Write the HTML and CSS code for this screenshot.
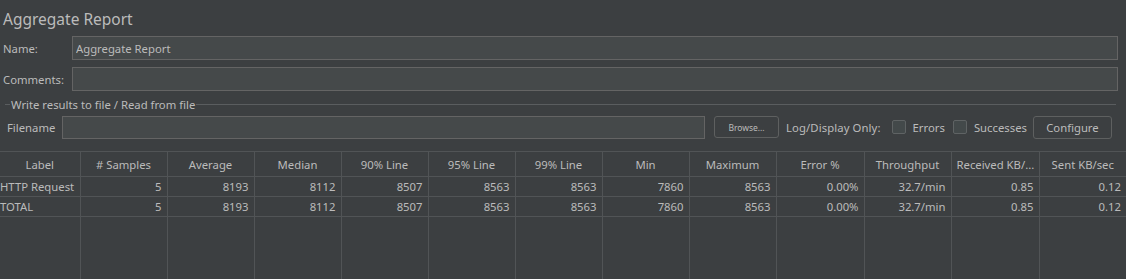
FILE: index.html
```html
<!DOCTYPE html>
<html lang="en">
<head>
    <meta charset="UTF-8">
    <meta name="viewport" content="width=device-width, initial-scale=1.0">
    <title>Aggregate Report</title>
    <link rel="stylesheet" href="styles.css">
</head>
<body>
    <div class="panel">
        <h3 class="panel-title">Aggregate Report</h3>

        <div class="field-row">
            <label class="field-label">Name:</label>
            <input class="text-input" type="text" value="Aggregate Report">
        </div>
        <div class="field-row">
            <label class="field-label">Comments:</label>
            <input class="text-input" type="text">
        </div>

        <fieldset class="file-box">
            <legend>Write results to file / Read from file</legend>
            <div class="file-row">
                <label class="file-label">Filename</label>
                <input class="text-input file-input" type="text">
                <button class="btn btn-small">Browse...</button>
                <span class="log-label">Log/Display Only:</span>
                <label class="check"><span class="check-box"></span>Errors</label>
                <label class="check check-next"><span class="check-box"></span>Successes</label>
                <button class="btn btn-configure">Configure</button>
            </div>
        </fieldset>
    </div>

    <table class="report">
        <colgroup>
            <col style="width: 80px">
            <col style="width: 87px">
            <col style="width: 87px">
            <col style="width: 87px">
            <col style="width: 87px">
            <col style="width: 87px">
            <col style="width: 87px">
            <col style="width: 87px">
            <col style="width: 87px">
            <col style="width: 88px">
            <col style="width: 87px">
            <col style="width: 88px">
            <col>
        </colgroup>
        <thead>
            <tr>
                <th>Label</th>
                <th># Samples</th>
                <th>Average</th>
                <th>Median</th>
                <th>90% Line</th>
                <th>95% Line</th>
                <th>99% Line</th>
                <th>Min</th>
                <th>Maximum</th>
                <th>Error %</th>
                <th>Throughput</th>
                <th>Received KB/...</th>
                <th>Sent KB/sec</th>
            </tr>
        </thead>
        <tbody>
            <tr>
                <td class="name">HTTP Request</td>
                <td>5</td><td>8193</td><td>8112</td><td>8507</td><td>8563</td><td>8563</td>
                <td>7860</td><td>8563</td><td>0.00%</td><td>32.7/min</td><td>0.85</td><td>0.12</td>
            </tr>
            <tr>
                <td class="name">TOTAL</td>
                <td>5</td><td>8193</td><td>8112</td><td>8507</td><td>8563</td><td>8563</td>
                <td>7860</td><td>8563</td><td>0.00%</td><td>32.7/min</td><td>0.85</td><td>0.12</td>
            </tr>
            <tr class="filler">
                <td></td><td></td><td></td><td></td><td></td><td></td><td></td>
                <td></td><td></td><td></td><td></td><td></td><td></td>
            </tr>
        </tbody>
    </table>
</body>
</html>
```

FILE: styles.css
```css
body {
    margin: 0;
    padding: 0;
    background-color: #3c3f41;
    color: #bbbbbb;
    font-family: "Noto Sans", "Open Sans", sans-serif;
    font-size: 11.3px;
    overflow: hidden;
}

.panel {
    padding: 0 8px 0 3px;
}

.panel-title {
    margin: 0;
    height: 36px;
    line-height: 38px;
    font-size: 15.5px;
    font-weight: normal;
}

.field-row {
    display: flex;
    align-items: center;
    height: 24px;
    margin-bottom: 7px;
}

.field-label {
    width: 69px;
    flex-shrink: 0;
}

.text-input {
    flex: 1;
    box-sizing: border-box;
    height: 24px;
    margin: 0;
    padding: 0 3px;
    background-color: #45494a;
    border: 1px solid #646464;
    color: #bbbbbb;
    font-family: inherit;
    font-size: 11.3px;
    outline: none;
}

.file-box {
    margin: -1px 2px 0 2px;
    padding: 0 0 0 2px;
    border: none;
    border-top: 1px solid #5a5d5f;
}

.file-box legend {
    padding: 0 1px;
    margin-left: 3px;
}

.file-row {
    display: flex;
    align-items: center;
    height: 24px;
    margin-top: 3px;
    white-space: nowrap;
}

.file-label {
    width: 55px;
    flex-shrink: 0;
}

.file-input {
    flex: 0 0 643px;
    height: 23px;
}

.btn {
    box-sizing: border-box;
    height: 23px;
    padding: 0 12px;
    margin-left: 8px;
    background-color: #3c3f41;
    border: 1px solid #5e6060;
    border-radius: 3px;
    color: #bbbbbb;
    font-family: inherit;
    font-size: 11.3px;
}

.btn-small {
    width: 65px;
    height: 22px;
    padding: 0;
    margin-left: 9px;
    font-size: 8.5px;
}

.btn-configure {
    width: 79px;
    padding: 0;
    margin-left: 6px;
}

.log-label {
    margin-left: 7px;
    letter-spacing: 0.1px;
}

.check {
    display: flex;
    align-items: center;
    margin-left: 11px;
}

.check-next {
    margin-left: 8px;
}

.check-box {
    box-sizing: border-box;
    width: 14px;
    height: 14px;
    margin-right: 7px;
    background-color: #43494a;
    border: 1px solid #5f6364;
    border-radius: 2px;
}

.report {
    width: 100%;
    margin-top: 12px;
    table-layout: fixed;
    border-collapse: collapse;
    border-top: 1px solid #2f3234;
}

.report th,
.report td {
    padding: 0 5px;
    border: 1px solid #515456;
    white-space: nowrap;
    overflow: hidden;
    font-weight: normal;
}

.report tr > :first-child {
    border-left: none;
}

.report tr > :last-child {
    border-right: none;
}

.report th {
    height: 24px;
    text-align: center;
}

.report td {
    height: 19px;
    text-align: right;
}

.report td.name {
    text-align: left;
    padding-left: 0;
}

.report .filler td {
    height: 62px;
    border-bottom: none;
}
```
